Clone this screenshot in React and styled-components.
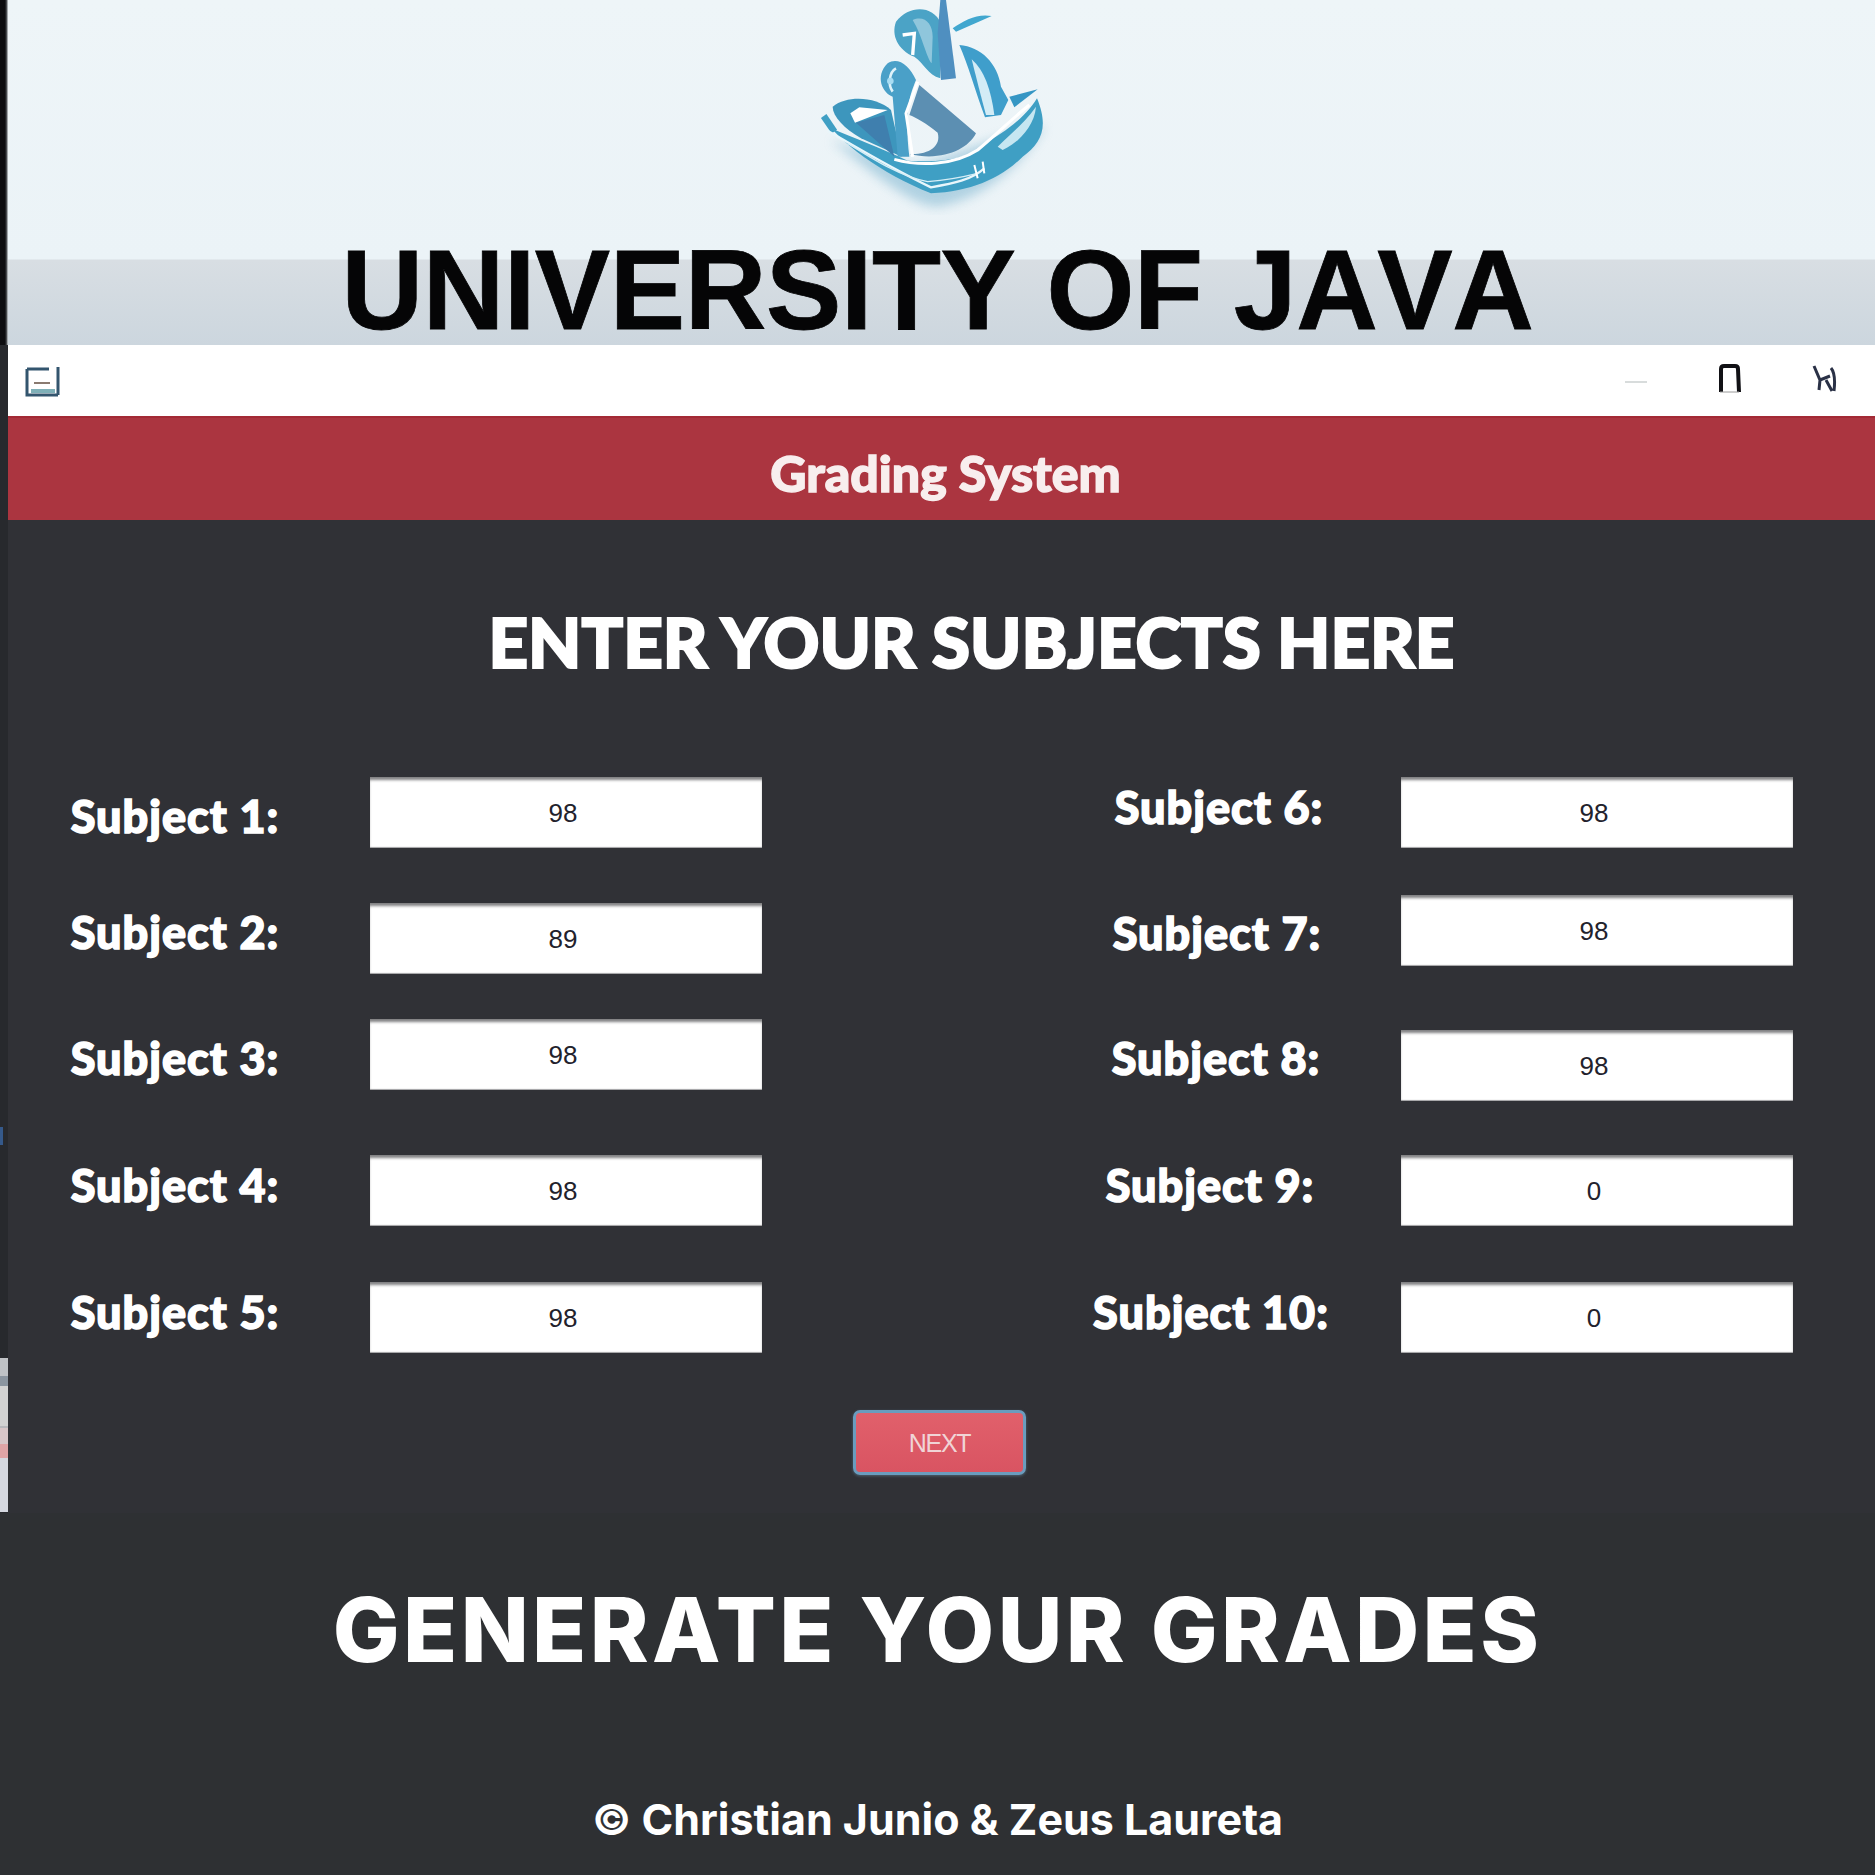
import styled, { createGlobalStyle } from "styled-components";

const GlobalStyle = createGlobalStyle`
  html, body {
    margin: 0;
    padding: 0;
    background: #2e3033;
  }
  * {
    box-sizing: border-box;
  }
`;

const leftRows = [
  { name: "Subject 1:", value: "98", gap: 0, nudge: 14, pad: 60 },
  { name: "Subject 2:", value: "89", gap: 55, nudge: 4, pad: 60 },
  { name: "Subject 3:", value: "98", gap: 45, nudge: 14, pad: 60 },
  { name: "Subject 4:", value: "98", gap: 65, nudge: 5, pad: 60 },
  { name: "Subject 5:", value: "98", gap: 56, nudge: 5, pad: 60 },
];

const rightRows = [
  { name: "Subject 6:", value: "98", gap: 0, nudge: 5, pad: 4 },
  { name: "Subject 7:", value: "98", gap: 47, nudge: 13, pad: 8 },
  { name: "Subject 8:", value: "98", gap: 64, nudge: 3, pad: 10 },
  { name: "Subject 9:", value: "0", gap: 54, nudge: 5, pad: 22 },
  { name: "Subject 10:", value: "0", gap: 56, nudge: 5, pad: 20 },
];

const Page = styled.div`
  width: 1875px;
  height: 1875px;
  display: flex;
  flex-direction: column;
  overflow: hidden;
  background: #2e3033;
`;

const Upper = styled.div`
  height: 1513px;
  display: flex;
`;

const SideStrip = styled.div`
  width: 8px;
  flex: none;
  display: flex;
  flex-direction: column;
  background: #27292d;
`;

const StripTop = styled.div`
  height: 345px;
  background: linear-gradient(90deg, #0d0d10 0 5px, #5c6064 7px, #e8eef2 8px);
`;

const StripFill = styled.div`
  flex: 1;
`;

const StripMark = styled.div`
  width: 3px;
  height: 18px;
  margin-top: 782px;
  background: #35598a;
`;

const StripThumb = styled.div`
  height: 154px;
  margin-top: 213px;
  background: linear-gradient(
    #bfc2c6 0 18px,
    #8b95a0 18px 28px,
    #d2d2d2 28px 68px,
    #b8b8bc 68px 70px,
    #d8c6c8 70px 86px,
    #e0a4a6 86px 100px,
    #d5d8e0 100px
  );
`;

const Window = styled.div`
  flex: 1;
  min-width: 0;
  display: flex;
  flex-direction: column;
`;

const Hero = styled.header`
  height: 345px;
  display: flex;
  flex-direction: column;
  align-items: center;
  background: linear-gradient(
    #eef5f8 0,
    #ebf3f7 259px,
    #d8dee3 260px,
    #ccd6de 345px
  );
`;

const LogoMark = styled.svg`
  width: 300px;
  height: 220px;
  flex: none;
  margin-right: 22px;
  filter: blur(0.7px);
`;

const UniversityTitle = styled.h1`
  margin: 18px 8px 0 0;
  font-family: "Liberation Sans", Arial, sans-serif;
  font-weight: 700;
  font-size: 113px;
  line-height: 104px;
  font-kerning: none;
  letter-spacing: -0.4px;
  color: #050506;
  -webkit-text-stroke: 0.8px #050506;
  white-space: nowrap;
`;

const TitleBar = styled.div`
  height: 71px;
  flex: none;
  display: flex;
  align-items: center;
  padding: 0 38px 4px 17px;
  background: #ffffff;
`;

const AppIcon = styled.svg`
  width: 36px;
  height: 34px;
  margin-top: 6px;
  filter: blur(0.6px);
`;

const WindowControls = styled.div`
  margin-left: auto;
  display: flex;
  align-items: center;
  gap: 71px;
`;

const ControlIcon = styled.svg`
  width: ${(p) => p.$w}px;
  height: 30px;
  filter: blur(0.6px);
`;

const Banner = styled.div`
  height: 104px;
  flex: none;
  display: flex;
  align-items: center;
  justify-content: center;
  padding: 8px 0 0 8px;
  background: #ab3540;
  border-top: 2px solid #a32a35;
`;

const BannerTitle = styled.h2`
  margin: 0;
  font-family: Lato, sans-serif;
  font-weight: 900;
  font-size: 50px;
  line-height: 60px;
  color: #f8eeee;
  -webkit-text-stroke: 1.4px #f8eeee;
`;

const Panel = styled.main`
  flex: 1;
  display: flex;
  flex-direction: column;
  background: #303136;
`;

const PanelHeading = styled.h2`
  margin: 82px 0 0;
  padding-left: 60px;
  text-align: center;
  font-family: Lato, sans-serif;
  font-weight: 900;
  font-size: 69px;
  line-height: 80px;
  color: #ffffff;
  -webkit-text-stroke: 2.2px #ffffff;
`;

const FormGrid = styled.div`
  margin-top: 95px;
  padding: 0 82px 0 32px;
  display: flex;
  justify-content: space-between;
`;

const FormColumn = styled.div`
  display: flex;
  flex-direction: column;
`;

const FieldRow = styled.div`
  display: flex;
  height: 71px;
  margin-top: ${(p) => p.$gap}px;
`;

const FieldLabel = styled.div`
  width: ${(p) => p.$width}px;
  flex: none;
  height: 50px;
  margin-top: ${(p) => p.$nudge}px;
  padding-right: ${(p) => p.$pad}px;
  display: flex;
  justify-content: center;
  align-items: center;
  font-family: Lato, sans-serif;
  font-weight: 900;
  font-size: 45px;
  line-height: 50px;
  letter-spacing: 1px;
  color: #ffffff;
  -webkit-text-stroke: 1.5px #ffffff;
  white-space: nowrap;
`;

const FieldBox = styled.div`
  width: 392px;
  height: 71px;
  flex: none;
  display: flex;
  align-items: center;
  justify-content: center;
  padding: 2px 6px 0 0;
  background: #ffffff;
  box-shadow: inset 0 4px 3px -1px #808082, inset 0 -2px 1px -1px #a0a0a2;
  font-family: "Liberation Sans", Arial, sans-serif;
  font-size: 26px;
  color: #22222c;
`;

const ButtonRow = styled.div`
  margin-top: 57px;
  display: flex;
  justify-content: center;
  padding-right: 4px;
`;

const NextButton = styled.button`
  width: 173px;
  height: 65px;
  padding: 2px 0 0;
  border: 3px solid #6a9cbe;
  border-radius: 7px;
  background: linear-gradient(#e1606b, #d95462);
  box-shadow: 0 1px 3px rgba(120, 170, 200, 0.4);
  font-family: "Liberation Sans", Arial, sans-serif;
  font-size: 25px;
  letter-spacing: -1.3px;
  color: #f0d4d6;
`;

const Footer = styled.footer`
  flex: 1;
  display: flex;
  flex-direction: column;
  align-items: center;
  font-family: Inter, sans-serif;
  color: #ffffff;
`;

const Tagline = styled.div`
  margin-top: 70px;
  font-weight: 800;
  font-size: 89px;
  line-height: 94px;
  letter-spacing: 3.3px;
`;

const Credit = styled.div`
  margin-top: 118px;
  font-weight: 700;
  font-size: 43px;
  line-height: 48px;
`;

const Logo = () => (
  <LogoMark viewBox="0 0 900 660">
    <defs>
      <filter id="logoShadow">
        <feGaussianBlur stdDeviation="16" />
      </filter>
    </defs>
    <path d="M150 420 C300 540 400 620 470 620 C600 600 720 500 790 380 L700 400 L400 500 Z" fill="#7fb6d0" opacity="0.55" filter="url(#logoShadow)" />
    <path d="M122 345 C170 425 300 520 450 580 C570 575 660 535 725 470 C780 430 805 385 768 295 C735 350 680 390 620 425 C580 470 500 490 380 482 C300 445 220 415 150 385 Z" fill="#3f9fc4" />
    <path d="M128 348 L160 395" stroke="#3f9fc4" strokeWidth="20" />
    <path d="M140 392 C240 450 340 510 450 562 C520 550 570 540 610 505" fill="none" stroke="#e8f6fb" strokeWidth="7" />
    <path d="M200 430 C280 480 360 530 440 545 C500 540 550 530 590 520" fill="none" stroke="#d6eef6" strokeWidth="4" />
    <path d="M340 478 C420 500 520 495 590 450 C650 400 700 350 745 315" fill="none" stroke="#ffffff" strokeWidth="9" />
    <path d="M580 495 L590 535 M605 485 L610 520" stroke="#ffffff" strokeWidth="6" />
    <path d="M650 440 C690 400 730 370 765 320 C760 380 710 430 665 450 Z" fill="#c6e6f1" />
    <path d="M155 320 C200 285 285 290 330 330 L362 470 L240 415 C190 385 155 350 155 320 Z" fill="#3d96bd" />
    <path d="M208 340 L235 322 L320 330 L222 368 Z" fill="#ffffff" />
    <path d="M225 368 L310 345 L340 470 Z" fill="#3f7fae" />
    <path d="M320 190 C350 170 385 195 405 240 C385 290 370 330 385 470 L350 470 L335 290 C305 280 280 230 320 190 Z" fill="#4aa0c8" />
    <path d="M345 205 C325 215 320 255 335 275" fill="none" stroke="#dff2f9" strokeWidth="8" />
    <circle cx="328" cy="243" r="10" fill="#a9ddf3" />
    <path d="M415 255 L585 400 C560 450 480 485 385 462 C440 465 482 440 470 398 C435 370 405 352 385 345 Z" fill="#5c8fb2" />
    <path d="M410 245 L375 340 L395 470" fill="none" stroke="#ffffff" strokeWidth="9" />
    <path d="M345 65 C385 15 455 15 480 70 L478 235 C440 225 430 190 400 170 C350 150 330 105 345 65 Z" fill="#4ba3c6" />
    <path d="M395 60 C430 45 455 70 455 110 L452 190 C435 170 425 110 395 60 Z" fill="#8fc6dc" />
    <path d="M365 105 L400 100 L395 165" fill="none" stroke="#ffffff" strokeWidth="10" />
    <path d="M478 0 L495 0 L525 235 L480 240 L470 100 Z" fill="#4f8fc0" />
    <path d="M515 85 C550 60 590 40 632 48 L600 62 L525 95 Z" fill="#41a7cf" />
    <path d="M535 135 C600 140 650 190 660 260 L682 300 L660 345 L612 352 C585 280 560 190 535 135 Z" fill="#3f9ecb" />
    <path d="M572 178 C610 210 630 270 640 345 L615 345 C600 290 585 230 572 178 Z" fill="#d3ecf6" />
    <path d="M685 290 L770 268 L700 322 Z" fill="#3596c4" />
  </LogoMark>
);

const SubjectColumn = ({ rows, labelWidth }) => (
  <FormColumn>
    {rows.map((row) => (
      <FieldRow key={row.name} $gap={row.gap}>
        <FieldLabel $width={labelWidth} $nudge={row.nudge} $pad={row.pad}>
          {row.name}
        </FieldLabel>
        <FieldBox>{row.value}</FieldBox>
      </FieldRow>
    ))}
  </FormColumn>
);

const App = () => {
  return (
    <>
      <GlobalStyle />
      <Page>
        <Upper>
          <SideStrip>
            <StripTop />
            <StripMark />
            <StripThumb />
            <StripFill />
          </SideStrip>
          <Window>
            <Hero>
              <Logo />
              <UniversityTitle>UNIVERSITY OF JAVA</UniversityTitle>
            </Hero>
            <TitleBar>
              <AppIcon viewBox="0 0 36 34">
                <path d="M2 4 H24 M2 4 V30 H33 M33 2 V30" fill="none" stroke="#33556e" strokeWidth="3" />
                <rect x="6" y="24" width="24" height="4" fill="#7fb0b8" />
                <rect x="9" y="17" width="16" height="2" fill="#8a7a70" />
              </AppIcon>
              <WindowControls>
                <ControlIcon $w={22} viewBox="0 0 22 30">
                  <path d="M0 18 H22" stroke="#d8dcdc" strokeWidth="2" />
                </ControlIcon>
                <ControlIcon $w={23} viewBox="0 0 23 30">
                  <path d="M3 28 L3 5 Q3 2 6 2 H17 Q20 2 20 5 L21 28" fill="none" stroke="#111115" strokeWidth="4" />
                  <path d="M2 28 H21" stroke="#9a9a9a" strokeWidth="1" />
                </ControlIcon>
                <ControlIcon $w={25} viewBox="0 0 25 30">
                  <path d="M2 2 L8 16 L18 12 M8 16 L7 26 M19 4 Q24 10 22 27 M14 16 L20 27" fill="none" stroke="#2a3146" strokeWidth="3" />
                </ControlIcon>
              </WindowControls>
            </TitleBar>
            <Banner>
              <BannerTitle>Grading System</BannerTitle>
            </Banner>
            <Panel>
              <PanelHeading>ENTER YOUR SUBJECTS HERE</PanelHeading>
              <FormGrid>
                <SubjectColumn rows={leftRows} labelWidth={330} />
                <SubjectColumn rows={rightRows} labelWidth={360} />
              </FormGrid>
              <ButtonRow>
                <NextButton>NEXT</NextButton>
              </ButtonRow>
            </Panel>
          </Window>
        </Upper>
        <Footer>
          <Tagline>GENERATE YOUR GRADES</Tagline>
          <Credit>© Christian Junio &amp; Zeus Laureta</Credit>
        </Footer>
      </Page>
    </>
  );
};

export default App;
